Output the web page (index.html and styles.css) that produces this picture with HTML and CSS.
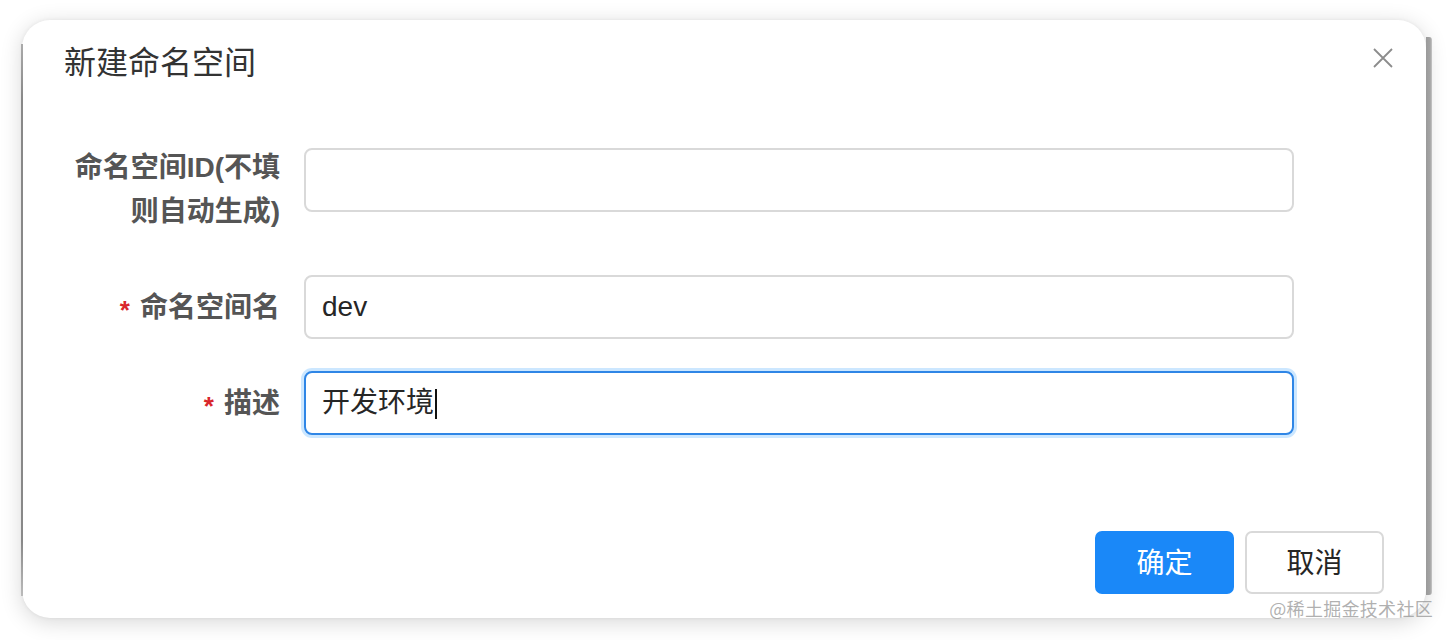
FILE: index.html
```html
<!DOCTYPE html>
<html lang="zh-CN">
<head>
<meta charset="utf-8">
<title>新建命名空间</title>
<link rel="stylesheet" href="styles.css">
</head>
<body>
<div class="dialog">
  <div class="header">
    <div class="title">新建命名空间</div>
    <button class="close" aria-label="关闭">
      <svg width="20" height="20" viewBox="0 0 20 20"><path d="M1 1L19 19M19 1L1 19" stroke="#8c8c8c" stroke-width="1.8" fill="none"/></svg>
    </button>
  </div>
  <div class="form">
    <div class="row row-multi">
      <label class="label label-multi">命名空间ID(不填<br>则自动生成)</label>
      <div class="input"></div>
    </div>
    <div class="row row-2">
      <label class="label"><span class="req">*</span>命名空间名</label>
      <div class="input">dev</div>
    </div>
    <div class="row row-3">
      <label class="label"><span class="req">*</span>描述</label>
      <div class="input focused">开发环境<span class="caret"></span></div>
    </div>
  </div>
  <div class="footer">
    <button class="btn primary">确定</button>
    <button class="btn">取消</button>
  </div>
  <div class="watermark">@稀土掘金技术社区</div>
</div>
</body>
</html>
```

FILE: styles.css
```css
html, body {
  margin: 0;
  padding: 0;
  background: #ffffff;
}
body {
  width: 1452px;
  height: 640px;
  overflow: hidden;
  font-family: "Liberation Sans", "Noto Sans CJK SC", sans-serif;
  color: #262626;
}
.dialog {
  position: relative;
  margin: 20px 0 0 22px;
  width: 1404px;
  height: 598px;
  background: #fff;
  border-radius: 28px;
  box-shadow: 0 4px 22px rgba(0,0,0,0.16), 0 0 4px rgba(0,0,0,0.06);
}
.dialog::before {
  content: "";
  position: absolute;
  left: -1px;
  top: 24px;
  width: 2px;
  height: 552px;
  background: linear-gradient(#aaa, #888 10%, #888 90%, #bbb);
}
.dialog::after {
  content: "";
  position: absolute;
  right: -6px;
  top: 17px;
  width: 6px;
  height: 558px;
  background: linear-gradient(to right, #9a9a9a, #a4a4a4 70%, #c8c8c8);
  border-radius: 0 3px 3px 0;
}
.header {
  padding: 21px 0 0 42px;
}
.title {
  font-size: 32px;
  line-height: 44px;
  color: #333;
  font-weight: 400;
}
.close {
  position: absolute;
  top: 28px;
  right: 33px;
  width: 20px;
  height: 20px;
  padding: 0;
  border: 0;
  background: none;
  display: flex;
}
.form {
  margin-top: 61px;
  padding-left: 42px;
}
.row {
  display: flex;
  align-items: center;
  gap: 24px;
}
.row-multi {
  align-items: flex-start;
}
.row-multi .input {
  margin-top: 2px;
}
.row-2 {
  margin-top: 41px;
}
.row-3 {
  margin-top: 32px;
}
.label {
  width: 216px;
  text-align: right;
  font-size: 28px;
  line-height: 44px;
  font-weight: 700;
  color: #555;
  white-space: nowrap;
}
.row-2 .label, .row-3 .label {
  padding-top: 3px;
}
.req {
  color: #d9262c;
  font-family: "Liberation Sans", sans-serif;
  font-size: 26px;
  margin-right: 10px;
  vertical-align: -2px;
}
.input {
  box-sizing: border-box;
  width: 990px;
  height: 64px;
  border: 2px solid #d9d9d9;
  border-radius: 8px;
  padding: 0 16px;
  font-size: 28px;
  line-height: 60px;
  color: #262626;
  background: #fff;
}
.input.focused {
  border-color: #2f86e6;
  box-shadow: 0 0 0 3px rgba(24,144,255,0.22);
}
.caret {
  display: inline-block;
  width: 2px;
  height: 30px;
  background: #111;
  vertical-align: -7px;
  margin-left: 1px;
}
.footer {
  display: flex;
  justify-content: flex-end;
  gap: 11px;
  padding-right: 42px;
  margin-top: 96px;
}
.btn {
  box-sizing: border-box;
  width: 139px;
  height: 63px;
  border: 2px solid #d9d9d9;
  border-radius: 7px;
  background: #fff;
  color: #262626;
  font-family: "Liberation Sans", "Noto Sans CJK SC", sans-serif;
  font-size: 28px;
  padding: 0 0 3px;
}
.btn.primary {
  background: #1a88f8;
  border-color: #1a88f8;
  color: #fff;
}
.watermark {
  position: absolute;
  right: -7px;
  bottom: -1px;
  font-size: 18px;
  line-height: 22px;
  color: rgba(150,150,150,0.75);
  font-family: "Noto Sans CJK SC", sans-serif;
  letter-spacing: 0.3px;
}
```
